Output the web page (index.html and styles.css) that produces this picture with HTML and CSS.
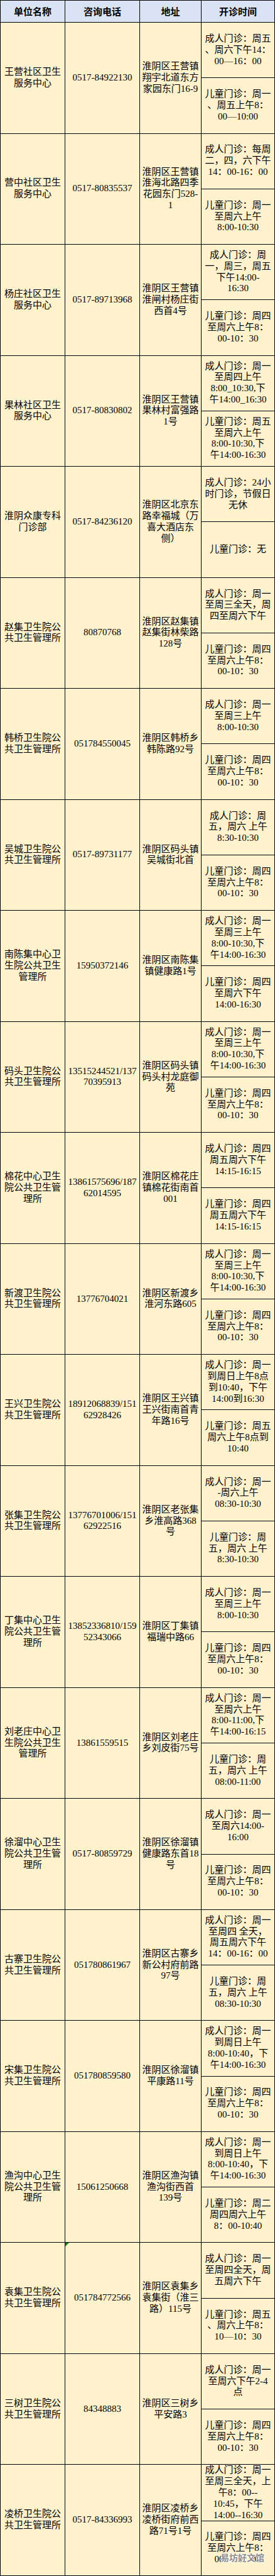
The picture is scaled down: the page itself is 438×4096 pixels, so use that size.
FILE: index.html
```html
<!DOCTYPE html>
<html lang="zh-CN">
<head>
<meta charset="utf-8">
<title>淮阴区门诊开诊时间</title>
<link rel="stylesheet" href="styles.css">
</head>
<body>
<div class="sheet">
  <div class="row head">
    <div class="cell">单位名称</div>
    <div class="cell">咨询电话</div>
    <div class="cell">地址</div>
    <div class="cell">开诊时间</div>
  </div>

  <div class="row">
    <div class="cell name">王营社区卫生<br>服务中心</div>
    <div class="cell tel">0517-84922130</div>
    <div class="cell addr">淮阴区王营镇<br>翔宇北道东方<br>家园东门16-9</div>
    <div class="cell adult">成人门诊：周五<br>、周六下午14：<br>00—16：00</div>
    <div class="cell child">儿童门诊：周一<br>、周五上午8：<br>00—10:00</div>
  </div>

  <div class="row">
    <div class="cell name">营中社区卫生<br>服务中心</div>
    <div class="cell tel">0517-80835537</div>
    <div class="cell addr">淮阴区王营镇<br>淮海北路四季<br>花园东门528-<br>1</div>
    <div class="cell adult">成人门诊：每周<br>二，四，六下午<br>14：00-16：00</div>
    <div class="cell child">儿童门诊：周一<br>至周六上午<br>8:00-10:30</div>
  </div>

  <div class="row">
    <div class="cell name">杨庄社区卫生<br>服务中心</div>
    <div class="cell tel">0517-89713968</div>
    <div class="cell addr">淮阴区王营镇<br>淮闸村杨庄街<br>西首4号</div>
    <div class="cell adult">成人门诊：周<br>一，周三，周五<br>下午14:00-<br>16:30</div>
    <div class="cell child">儿童门诊：周四<br>至周六上午8：<br>00-10：30</div>
  </div>

  <div class="row">
    <div class="cell name">果林社区卫生<br>服务中心</div>
    <div class="cell tel">0517-80830802</div>
    <div class="cell addr">淮阴区王营镇<br>果林村富强路<br>1号</div>
    <div class="cell adult">成人门诊：周一<br>至周四上午<br>8:00_10:30,下<br>午14:00_16:30</div>
    <div class="cell child">儿童门诊：周五<br>至周六上午<br>8:00-10:30,下<br>午14:00-16:30</div>
  </div>

  <div class="row">
    <div class="cell name">淮阴众康专科<br>门诊部</div>
    <div class="cell tel">0517-84236120</div>
    <div class="cell addr">淮阴区北京东<br>路幸福城（万<br>喜大酒店东<br>侧）</div>
    <div class="cell adult">成人门诊：24小<br>时门诊，节假日<br>无休</div>
    <div class="cell child">儿童门诊：无</div>
  </div>

  <div class="row">
    <div class="cell name">赵集卫生院公<br>共卫生管理所</div>
    <div class="cell tel">80870768</div>
    <div class="cell addr">淮阴区赵集镇<br>赵集街林柴路<br>128号</div>
    <div class="cell adult">成人门诊：周一<br>至周三全天，周<br>四至周六下午</div>
    <div class="cell child">儿童门诊：周四<br>至周六上午8：<br>00-10：30</div>
  </div>

  <div class="row">
    <div class="cell name">韩桥卫生院公<br>共卫生管理所</div>
    <div class="cell tel">051784550045</div>
    <div class="cell addr">淮阴区韩桥乡<br>韩陈路92号</div>
    <div class="cell adult">成人门诊：周一<br>至周三上午<br>8:00-10:30</div>
    <div class="cell child">儿童门诊：周四<br>至周六上午8：<br>00-10：30</div>
  </div>

  <div class="row">
    <div class="cell name">吴城卫生院公<br>共卫生管理所</div>
    <div class="cell tel">0517-89731177</div>
    <div class="cell addr">淮阴区码头镇<br>吴城街北首</div>
    <div class="cell adult">成人门诊：周<br>五，周六 上午<br>8:30-10:30</div>
    <div class="cell child">儿童门诊：周四<br>至周六上午8：<br>00-10：30</div>
  </div>

  <div class="row">
    <div class="cell name">南陈集中心卫<br>生院公共卫生<br>管理所</div>
    <div class="cell tel">15950372146</div>
    <div class="cell addr">淮阴区南陈集<br>镇健康路1号</div>
    <div class="cell adult">成人门诊：周一<br>至周三上午<br>8:00-10:30,下<br>午14:00-16:30</div>
    <div class="cell child">儿童门诊：周四<br>至周六下午<br>14:00-16:30</div>
  </div>

  <div class="row">
    <div class="cell name">码头卫生院公<br>共卫生管理所</div>
    <div class="cell tel">13515244521/137<br>70395913</div>
    <div class="cell addr">淮阴区码头镇<br>码头村龙庭御<br>苑</div>
    <div class="cell adult">成人门诊：周一<br>至周三上午<br>8:00-10:30,下<br>午14:00-16:30</div>
    <div class="cell child">儿童门诊：周四<br>至周六上午8：<br>00-10：30</div>
  </div>

  <div class="row">
    <div class="cell name">棉花中心卫生<br>院公共卫生管<br>理所</div>
    <div class="cell tel">13861575696/187<br>62014595</div>
    <div class="cell addr">淮阴区棉花庄<br>镇棉花街南首<br>001</div>
    <div class="cell adult">成人门诊：周四<br>周五周六下午<br>14:15-16:15</div>
    <div class="cell child">儿童门诊：周四<br>周五周六下午<br>14:15-16:15</div>
  </div>

  <div class="row">
    <div class="cell name">新渡卫生院公<br>共卫生管理所</div>
    <div class="cell tel">13776704021</div>
    <div class="cell addr">淮阴区新渡乡<br>淮河东路605</div>
    <div class="cell adult">成人门诊：周一<br>至周三上午<br>8:00-10:30,下<br>午14:00-16:30</div>
    <div class="cell child">儿童门诊：周四<br>至周六上午8：<br>00-10：30</div>
  </div>

  <div class="row">
    <div class="cell name">王兴卫生院公<br>共卫生管理所</div>
    <div class="cell tel">18912068839/151<br>62928426</div>
    <div class="cell addr">淮阴区王兴镇<br>王兴街南首青<br>年路16号</div>
    <div class="cell adult">成人门诊：周一<br>到周日上午8点<br>到10:40，下午<br>14:00到16:30</div>
    <div class="cell child">儿童门诊：周五<br>周六上午8点到<br>10:40</div>
  </div>

  <div class="row">
    <div class="cell name">张集卫生院公<br>共卫生管理所</div>
    <div class="cell tel">13776701006/151<br>62922516</div>
    <div class="cell addr">淮阴区老张集<br>乡淮高路368<br>号</div>
    <div class="cell adult">成人门诊：周一<br>-周六上午<br>08:30-10:30</div>
    <div class="cell child">儿童门诊：周<br>五，周六 上午<br>8:30-10:30</div>
  </div>

  <div class="row">
    <div class="cell name">丁集中心卫生<br>院公共卫生管<br>理所</div>
    <div class="cell tel">13852336810/159<br>52343066</div>
    <div class="cell addr">淮阴区丁集镇<br>福瑞中路66</div>
    <div class="cell adult">成人门诊：周一<br>至周三上午<br>8:00-10:30</div>
    <div class="cell child">儿童门诊：周四<br>至周六上午8：<br>00-10：30</div>
  </div>

  <div class="row">
    <div class="cell name">刘老庄中心卫<br>生院公共卫生<br>管理所</div>
    <div class="cell tel">13861559515</div>
    <div class="cell addr">淮阴区刘老庄<br>乡刘皮街75号</div>
    <div class="cell adult">成人门诊：周一<br>至周六上午<br>8:00-11:00,下<br>午14:00-16:15</div>
    <div class="cell child">儿童门诊：周<br>五，周六 上午<br>08:00-11:00</div>
  </div>

  <div class="row">
    <div class="cell name">徐溜中心卫生<br>院公共卫生管<br>理所</div>
    <div class="cell tel">0517-80859729</div>
    <div class="cell addr">淮阴区徐溜镇<br>健康路东首18<br>号</div>
    <div class="cell adult">成人门诊：周一<br>至周六14:00-<br>16:00</div>
    <div class="cell child">儿童门诊：周四<br>至周六上午8：<br>00-10：30</div>
  </div>

  <div class="row">
    <div class="cell name">古寨卫生院公<br>共卫生管理所</div>
    <div class="cell tel">051780861967</div>
    <div class="cell addr">淮阴区古寨乡<br>新公村府前路<br>97号</div>
    <div class="cell adult">成人门诊：周一<br>至周四 全天，<br>周五周六下午<br>14：00-16：00</div>
    <div class="cell child">儿童门诊：周<br>五，周六 上午<br>08:30-10:30</div>
  </div>

  <div class="row">
    <div class="cell name">宋集卫生院公<br>共卫生管理所</div>
    <div class="cell tel">051780859580</div>
    <div class="cell addr">淮阴区徐溜镇<br>平康路11号</div>
    <div class="cell adult">成人门诊：周一<br>到周日上午<br>8:00-10:40，下<br>午14:00-16:30</div>
    <div class="cell child">儿童门诊：周四<br>至周六上午8：<br>00-10：30</div>
  </div>

  <div class="row">
    <div class="cell name">渔沟中心卫生<br>院公共卫生管<br>理所</div>
    <div class="cell tel">15061250668</div>
    <div class="cell addr">淮阴区渔沟镇<br>渔沟街西首<br>139号</div>
    <div class="cell adult">成人门诊：周一<br>到周日上午<br>8:00-10:40，下<br>午14:00-16:30</div>
    <div class="cell child">儿童门诊：周二<br>周四周六上午<br>8：00-10:40</div>
  </div>

  <div class="row">
    <div class="cell name">袁集卫生院公<br>共卫生管理所</div>
    <div class="cell tel flagged">051784772566</div>
    <div class="cell addr">淮阴区袁集乡<br>袁集街（淮三<br>路）115号</div>
    <div class="cell adult">成人门诊：周一<br>至周四全天，周<br>五周六下午</div>
    <div class="cell child">儿童门诊：周五<br>、周六上午8：<br>10—10：30</div>
  </div>

  <div class="row">
    <div class="cell name">三树卫生院公<br>共卫生管理所</div>
    <div class="cell tel">84348883</div>
    <div class="cell addr">淮阴区三树乡<br>平安路3</div>
    <div class="cell adult">成人门诊：周一<br>至周六下午2-4<br>点</div>
    <div class="cell child">儿童门诊：周四<br>至周六上午8：<br>00-10：30</div>
  </div>

  <div class="row">
    <div class="cell name">凌桥卫生院公<br>共卫生管理所</div>
    <div class="cell tel">0517-84336993</div>
    <div class="cell addr">淮阴区凌桥乡<br>凌桥街府前西<br>路71号1号</div>
    <div class="cell adult">成人门诊：周一<br>至周三全天，上<br>午8：00--<br>10:45，下午<br>14:00--16:30</div>
    <div class="cell child">儿童门诊：周四<br>至周六上午8：<br>00—10：45</div>
  </div>

  <div class="mark">易坊好文馆</div>
</div>
</body>
</html>
```

FILE: styles.css
```css
html,
body {
  margin: 0;
  padding: 0;
  background: #ffffff;
}

body {
  font-family: "Liberation Serif", "Noto Sans CJK SC", serif;
  font-size: 15px;
  line-height: 17.8px;
  color: #000000;
}

.sheet {
  position: relative;
  width: 437px;
  border-left: 1px solid #000;
  border-top: 1px solid #000;
}

.row {
  display: grid;
  grid-template-columns: 103px 119px 98px 117px;
  grid-template-rows: 1fr 1fr;
  height: 176.52px;
  background: #fff2cc;
}

.row.head {
  grid-template-rows: 1fr;
  height: 35px;
  background: #dae3f3;
  font-family: "Noto Sans CJK SC", sans-serif;
  font-weight: 700;
  font-size: 15px;
}

.cell {
  display: flex;
  align-items: center;
  justify-content: center;
  text-align: center;
  white-space: nowrap;
  box-sizing: border-box;
  border-right: 1px solid #000;
  border-bottom: 1px solid #000;
  min-width: 0;
}

.row > .name,
.row > .tel,
.row > .addr {
  grid-row: 1 / span 2;
}

.row > .adult {
  grid-column: 4;
  grid-row: 1;
}

.row > .child {
  grid-column: 4;
  grid-row: 2;
}

.flagged {
  position: relative;
}

.flagged::before {
  content: "";
  position: absolute;
  top: 0;
  left: 0;
  border-top: 6px solid #17801b;
  border-right: 6px solid transparent;
}

.mark {
  position: absolute;
  right: 17px;
  bottom: 20px;
  font-family: "Noto Sans CJK SC", sans-serif;
  font-weight: 700;
  font-size: 14px;
  line-height: 20px;
  color: #8c8c8c;
  text-shadow: 1px 0 0 #fff, -1px 0 0 #fff, 0 1px 0 #fff, 0 -1px 0 #fff;
  white-space: nowrap;
}
```
